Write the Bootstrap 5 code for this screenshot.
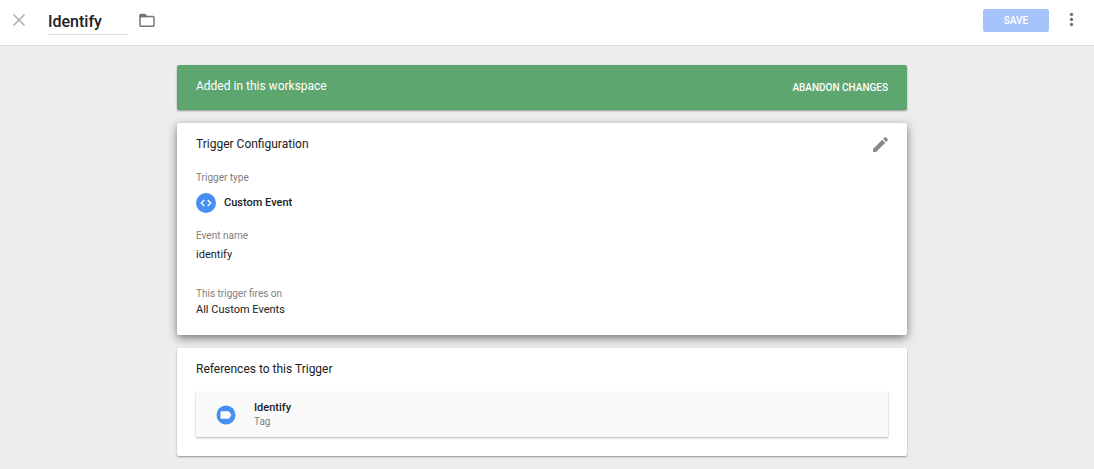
<!DOCTYPE html>
<html lang="en">
<head>
<meta charset="utf-8">
<meta name="viewport" content="width=device-width, initial-scale=1">
<title>Identify</title>
<link href="https://cdn.jsdelivr.net/npm/bootstrap@5.3.0/dist/css/bootstrap.min.css" rel="stylesheet">
<style>
  body { background: #ededed; color: #212121; font-family: Roboto, "Liberation Sans", sans-serif; font-size: 11px; line-height: 16px; }
  svg { display: block; }
  .topbar { height: 46px; background: #fff; border-bottom: 1px solid #dcdcdc; padding: 0 14px 5px 11px; }
  .icon-btn { border: 0; background: none; padding: 0; color: #757575; }
  .close-btn { color: #b0b0b0; }
  .name-input { width: 80px; height: 28px; margin: 2px 0 0 21px; padding: 2px 0 0; border: 0; border-bottom: 1px solid #dcdcdc; border-radius: 0; background: none; font-size: 16px; font-weight: 500; color: #212121; }
  .folder-btn { margin-left: 9px; }
  .save-btn, .save-btn:disabled { width: 66px; height: 23px; padding: 0; border: 0; border-radius: 2px; background: #a5c4fb; color: #fff; opacity: 1; font-size: 10px; font-weight: 500; line-height: 23px; }
  .page-main { padding: 19px 10px 12px 0; }
  .stack { max-width: 730px; gap: 13px; }
  .panel { border: 0; border-radius: 2px; background: #fff; color: #212121; padding: 12px 19px 19px; box-shadow: 0 1px 2px rgba(0,0,0,.38); }
  .panel-raised { padding-bottom: 17px; box-shadow: 0 3px 10px rgba(0,0,0,.5); }
  .banner { height: 45px; padding: 0 19px 3px; background: #5ea670; color: #fff; }
  .heading { margin: 0; font-size: 12px; font-weight: 400; line-height: 18px; }
  .abandon-btn { padding: 3px 0 0; border: 0; background: none; color: #fff; font-size: 10px; font-weight: 500; line-height: 16px; }
  .field-label { font-size: 10px; font-weight: 400; line-height: 14px; color: #808080; }
  .strong-text { font-weight: 500; }
  .type-group { margin-top: 18px; }
  .type-row { margin-top: 8px; gap: 8px; }
  .name-group { margin-top: 16px; }
  .name-group dd { padding-top: 4px; }
  .fires-group { margin-top: 24px; }
  .fires-group dd { padding-top: 1px; }
  .reference { margin-top: 14px; height: 45px; padding: 0 20px; gap: 18px; line-height: 14px; background: #fafafa; color: #212121; text-decoration: none; box-shadow: 0 1px 2px rgba(0,0,0,.3); }
</style>
</head>
<body>
<header class="topbar d-flex align-items-center">
  <button class="icon-btn close-btn" type="button" aria-label="Close">
    <svg width="16" height="16" viewBox="0 0 16 16" fill="none" stroke="currentColor" stroke-width="1.600"><path d="M2.500 2.500l11 11M13.500 2.500l-11 11"/></svg>
  </button>
  <input class="name-input" type="text" value="Identify" aria-label="Trigger name">
  <button class="icon-btn folder-btn" type="button" aria-label="Choose folder">
    <svg width="20" height="20" viewBox="0 0 20 20"><path d="M3 5.500V15.300q0 .900.900.900h12.200q.9 0 .9-.9V7.500q0-.9-.9-.9H3" fill="none" stroke="currentColor" stroke-width="1.500"/><path d="M2.250 7.200V5.300q0-1.500 1.500-1.500H8.300L10.300 6v1.200z" fill="currentColor"/></svg>
  </button>
  <button class="btn save-btn ms-auto" type="button" disabled>SAVE</button>
  <button class="icon-btn ms-3" type="button" aria-label="More actions">
    <svg width="15" height="20" viewBox="0 0 15 20" fill="currentColor"><circle cx="6.500" cy="4.500" r="1.700"/><circle cx="6.500" cy="9.500" r="1.700"/><circle cx="6.500" cy="14.500" r="1.700"/></svg>
  </button>
</header>

<main class="page-main">
  <div class="stack d-flex flex-column mx-auto">
    <section class="panel banner d-flex align-items-center justify-content-between">
      <p class="heading">Added in this workspace</p>
      <button class="abandon-btn" type="button">ABANDON CHANGES</button>
    </section>

    <section class="panel panel-raised">
      <div class="d-flex align-items-center justify-content-between">
        <h2 class="heading">Trigger Configuration</h2>
        <button class="icon-btn" type="button" aria-label="Edit trigger">
          <svg width="15" height="15" viewBox="0 0 18 18" fill="#8a8a8a"><path d="M0 14.250V18h3.750L14.810 6.940l-3.750-3.750L0 14.250zM17.710 4.040a1 1 0 0 0 0-1.410L15.370.290a1 1 0 0 0-1.410 0l-1.830 1.830 3.750 3.750 1.830-1.830z"/></svg>
        </button>
      </div>
      <dl class="m-0">
        <div class="type-group">
          <dt class="field-label">Trigger type</dt>
          <dd class="type-row d-flex align-items-center mb-0">
            <svg width="20" height="20" viewBox="0 0 20 20" aria-hidden="true"><circle cx="10" cy="10" r="10" fill="#468ef0"/><path d="M8.300 7L5.300 10l3 3M11.700 7l3 3-3 3" fill="none" stroke="#fff" stroke-width="1.300"/></svg>
            <span class="strong-text">Custom Event</span>
          </dd>
        </div>
        <div class="name-group">
          <dt class="field-label">Event name</dt>
          <dd class="mb-0">identify</dd>
        </div>
        <div class="fires-group">
          <dt class="field-label">This trigger fires on</dt>
          <dd class="mb-0">All Custom Events</dd>
        </div>
      </dl>
    </section>

    <section class="panel">
      <h2 class="heading">References to this Trigger</h2>
      <a class="reference d-flex align-items-center" href="#">
        <svg width="20" height="20" viewBox="0 0 20 20" aria-hidden="true"><circle cx="10" cy="10" r="9.500" fill="#468ef0"/><path d="M5.500 6.300h6.600q.8 0 1.200.5l2.100 3.200-2.100 3.200q-.4.500-1.200.500H5.500q-1 0-1-1V7.300q0-1 1-1z" fill="#fff"/></svg>
        <span class="d-flex flex-column">
          <span class="strong-text">Identify</span>
          <span class="field-label">Tag</span>
        </span>
      </a>
    </section>
  </div>
</main>
<script src="https://cdn.jsdelivr.net/npm/bootstrap@5.3.0/dist/js/bootstrap.bundle.min.js"></script>
</body>
</html>
